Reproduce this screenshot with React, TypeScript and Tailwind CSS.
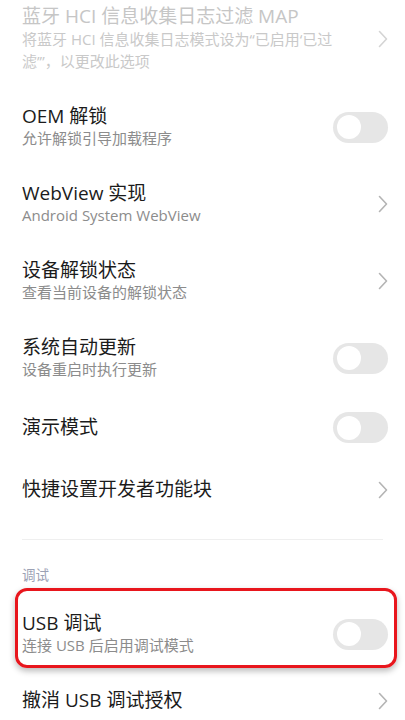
import type { ReactNode } from 'react';

function Chevron({ faded = false }: { faded?: boolean }) {
  return (
    <svg width="10" height="18" viewBox="0 0 10 18" fill="none" className="shrink-0">
      <path
        d="M1.5 1.5 L8.5 9 L1.5 16.5"
        stroke={faded ? '#d4d4d4' : '#b4b4b4'}
        strokeWidth="1.6"
        strokeLinecap="round"
        strokeLinejoin="round"
      />
    </svg>
  );
}

function Toggle() {
  return (
    <div className="flex h-[31px] w-[55px] shrink-0 items-center rounded-full bg-[#e6e6e6] pl-[4px]">
      <div className="h-[24px] w-[24px] rounded-full bg-white" />
    </div>
  );
}

interface RowProps {
  title: string;
  sub?: ReactNode;
  action: 'toggle' | 'chevron';
  disabled?: boolean;
  className?: string;
}

function Row({ title, sub, action, disabled = false, className = '' }: RowProps) {
  return (
    <div
      className={`flex items-center justify-between gap-4 pl-[22px] pr-[17px] ${
        sub ? 'py-4' : 'min-h-[62px]'
      } ${className}`}
    >
      <div className="flex min-w-0 flex-col">
        <div className={`text-[19px] leading-[22.5px] ${disabled ? 'text-[#c6c6c6]' : 'text-[#1b1b1b]'}`}>
          {title}
        </div>
        {sub && (
          <div className={`text-[15px] leading-[22.5px] ${disabled ? 'text-[#c9c9c9]' : 'text-[#8c8c8c]'}`}>
            {sub}
          </div>
        )}
      </div>
      {action === 'toggle' ? <Toggle /> : <Chevron faded={disabled} />}
    </div>
  );
}

export default function App() {
  return (
    <div
      className="h-[720px] w-[405px] overflow-hidden bg-white"
      style={{ fontFamily: '"Open Sans", "Noto Sans CJK SC", sans-serif' }}
    >
      <Row
        disabled
        className="!pt-[5px]"
        title="蓝牙 HCI 信息收集日志过滤 MAP"
        sub={
          <>
            将蓝牙 HCI 信息收集日志模式设为“已启用‘已过
            <br />
            滤’”，以更改此选项
          </>
        }
        action="chevron"
      />
      <Row title="OEM 解锁" sub="允许解锁引导加载程序" action="toggle" />
      <Row title="WebView 实现" sub="Android System WebView" action="chevron" />
      <Row title="设备解锁状态" sub="查看当前设备的解锁状态" action="chevron" />
      <Row title="系统自动更新" sub="设备重启时执行更新" action="toggle" />
      <Row title="演示模式" action="toggle" />
      <Row title="快捷设置开发者功能块" action="chevron" />

      <div className="mx-[22px] mt-[18px] h-px bg-[#efefef]" />

      <div className="pl-[22px] pt-[26px] pb-[12px] text-[13.5px] leading-[18px] text-[#9ba1b4]">调试</div>

      <div className="relative">
        <Row title="USB 调试" sub="连接 USB 后启用调试模式" action="toggle" className="!pb-[13px]" />
        <div className="pointer-events-none absolute -top-[8px] bottom-[2px] left-[15px] right-[8px] rounded-[12px] border-[3px] border-[#e8161d] shadow-[0_3px_6px_rgba(0,0,0,0.28)]" />
      </div>

      <Row title="撤消 USB 调试授权" action="chevron" />
    </div>
  );
}
